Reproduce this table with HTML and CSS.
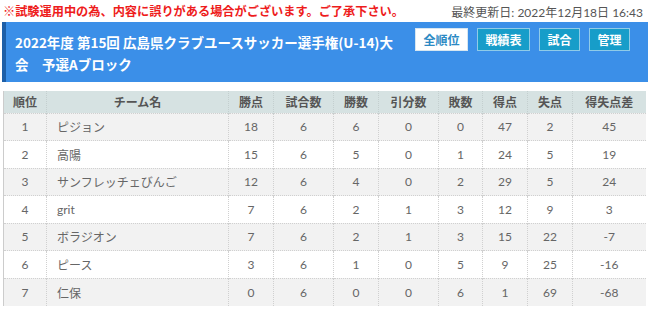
FILE: index.html
```html
<!DOCTYPE html>
<html lang="ja">
<head>
<meta charset="utf-8">
<link rel="stylesheet" href="styles.css">
</head>
<body>
<div class="topbar">
  <span class="warn">※試験運用中の為、内容に誤りがある場合がございます。ご了承下さい。</span>
  <span class="updated">最終更新日: 2022年12月18日 16:43</span>
</div>
<div class="header">
  <h1 class="title">2022年度 第15回 広島県クラブユースサッカー選手権(U-14)大会　予選Aブロック</h1>
  <div class="buttons">
    <span class="btn btn-active">全順位</span>
    <span class="btn">戦績表</span>
    <span class="btn">試合</span>
    <span class="btn">管理</span>
  </div>
</div>
<table class="standings">
  <colgroup>
    <col class="c-rank"><col class="c-team"><col class="c-pts"><col class="c-games"><col class="c-win"><col class="c-draw"><col class="c-lose"><col class="c-gf"><col class="c-ga"><col class="c-gd">
  </colgroup>
  <thead>
    <tr><th>順位</th><th>チーム名</th><th>勝点</th><th>試合数</th><th>勝数</th><th>引分数</th><th>敗数</th><th>得点</th><th>失点</th><th>得失点差</th></tr>
  </thead>
  <tbody>
    <tr><td>1</td><td class="team">ピジョン</td><td>18</td><td>6</td><td>6</td><td>0</td><td>0</td><td>47</td><td>2</td><td>45</td></tr>
    <tr><td>2</td><td class="team">高陽</td><td>15</td><td>6</td><td>5</td><td>0</td><td>1</td><td>24</td><td>5</td><td>19</td></tr>
    <tr><td>3</td><td class="team">サンフレッチェびんご</td><td>12</td><td>6</td><td>4</td><td>0</td><td>2</td><td>29</td><td>5</td><td>24</td></tr>
    <tr><td>4</td><td class="team">grit</td><td>7</td><td>6</td><td>2</td><td>1</td><td>3</td><td>12</td><td>9</td><td>3</td></tr>
    <tr><td>5</td><td class="team">ボラジオン</td><td>7</td><td>6</td><td>2</td><td>1</td><td>3</td><td>15</td><td>22</td><td>-7</td></tr>
    <tr><td>6</td><td class="team">ピース</td><td>3</td><td>6</td><td>1</td><td>0</td><td>5</td><td>9</td><td>25</td><td>-16</td></tr>
    <tr><td>7</td><td class="team">仁保</td><td>0</td><td>6</td><td>0</td><td>0</td><td>6</td><td>1</td><td>69</td><td>-68</td></tr>
  </tbody>
</table>
</body>
</html>
```

FILE: styles.css
```css
* { box-sizing: border-box; }
html, body { margin: 0; padding: 0; background: #fff; }
body {
  font-family: "Lato", "Noto Sans CJK JP", sans-serif;
  color: #666;
  padding: 0 2px 0 2px;
}
.topbar {
  display: flex;
  justify-content: space-between;
  align-items: center;
  height: 22px;
  padding: 0 5px 0 1px;
  font-size: 12px;
}
.warn {
  color: #ee1c1c;
  font-weight: bold;
  font-size: 12.2px;
  font-family: "Noto Sans CJK JP", sans-serif;
}
.updated {
  color: #555;
  font-family: "Lato", "Noto Sans CJK JP", sans-serif;
}
.header {
  display: flex;
  align-items: flex-start;
  background: #3b8fe8;
  border-left: 4px solid #1d5fa8;
  height: 60px;
  padding: 6px 18px 0 9px;
}
.title {
  flex: 0 0 384px;
  margin: 3px 0 0 0;
  font-size: 13.5px;
  line-height: 22px;
  font-weight: bold;
  color: #fff;
  font-family: "Noto Sans CJK JP", sans-serif;
}
.buttons {
  display: flex;
  gap: 9px;
  margin-left: auto;
}
.btn {
  display: inline-flex;
  align-items: center;
  height: 23px;
  padding: 0 7.5px;
  font-size: 12px;
  font-weight: bold;
  color: #fff;
  background: #179dc9;
  border: 1px solid #8fcbe8;
  font-family: "Noto Sans CJK JP", sans-serif;
}
.btn-active {
  background: #fff;
  color: #2c8ac4;
  border-color: #d7e6f0;
}
.standings {
  margin: 9px 0 0 1px;
  border-collapse: collapse;
  table-layout: fixed;
  width: 642px;
  font-size: 12px;
  border-left: 1px solid #ccc;
}
.c-rank { width: 43px; }
.c-team { width: 182px; }
.c-pts { width: 45px; }
.c-games { width: 60px; }
.c-win { width: 45px; }
.c-draw { width: 60px; }
.c-lose { width: 44px; }
.c-gf { width: 45px; }
.c-ga { width: 45px; }
.c-gd { width: 73px; }
.standings th {
  background: #d6e2e2;
  color: #555;
  font-weight: bold;
  height: 22px;
  padding: 0;
  text-align: center;
  border-left: 1px dotted #c4cfcf;
  font-family: "Noto Sans CJK JP", sans-serif;
}
.standings td {
  height: 27.5px;
  padding: 0;
  text-align: center;
  border-left: 1px dotted #d0d0d0;
  border-top: 1px dotted #d0d0d0;
}
.standings tbody tr:nth-child(odd) td { background: #f2f2f2; }
.standings td.team {
  text-align: left;
  padding-left: 10px;
}
.standings th:first-child, .standings td:first-child { border-left: none; }
```
